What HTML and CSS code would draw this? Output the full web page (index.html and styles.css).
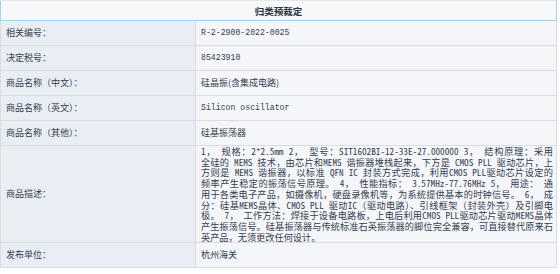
FILE: index.html
```html
<!DOCTYPE html>
<html lang="zh-CN">
<head>
<meta charset="utf-8">
<title>归类预裁定</title>
<link rel="stylesheet" href="styles.css">
</head>
<body>
<table class="ruling">
  <colgroup>
    <col class="col-label">
    <col class="col-value">
  </colgroup>
  <thead>
    <tr><th colspan="2" class="title">归类预裁定</th></tr>
  </thead>
  <tbody>
    <tr><td class="label">相关编号：</td><td class="value mono">R-2-2900-2022-0025</td></tr>
    <tr><td class="label">决定税号：</td><td class="value mono">85423910</td></tr>
    <tr><td class="label">商品名称（中文）：</td><td class="value">硅晶振(含集成电路)</td></tr>
    <tr><td class="label">商品名称（英文）：</td><td class="value mono">Silicon oscillator</td></tr>
    <tr><td class="label">商品名称（其他）：</td><td class="value">硅基振荡器</td></tr>
    <tr class="desc-row">
      <td class="label">商品描述：</td>
      <td class="value desc"><span class="ln">1， 规格：2*2.5mm 2， 型号：SIT1602BI-12-33E-27.000000 3， 结构原理：采用</span><span class="ln">全硅的 MEMS 技术，由芯片和MEMS 谐振器堆栈起来，下方是 CMOS PLL 驱动芯片，上</span><span class="ln">方则是 MEMS 谐振器，以标准 QFN IC 封装方式完成，利用CMOS PLL驱动芯片设定的</span><span class="ln">频率产生稳定的振荡信号原理。 4， 性能指标： 3.57MHz-77.76MHz 5， 用途： 通</span><span class="ln">用于各类电子产品，如摄像机，硬盘录像机等，为系统提供基本的时钟信号。 6， 成</span><span class="ln">分：硅基MEMS晶体、CMOS PLL 驱动IC（驱动电路）、引线框架（封装外壳）及引脚电</span><span class="ln">极。 7， 工作方法：焊接于设备电路板，上电后利用CMOS PLL驱动芯片驱动MEMS晶体</span><span class="ln">产生振荡信号。硅基振荡器与传统标准石英振荡器的脚位完全兼容，可直接替代原来石</span><span class="ln last">英产品，无须更改任何设计。</span></td>
    </tr>
    <tr><td class="label">发布单位：</td><td class="value">杭州海关</td></tr>
  </tbody>
</table>
</body>
</html>
```

FILE: styles.css
```css
html, body {
  margin: 0;
  padding: 0;
  background: #ffffff;
}

body {
  font-family: "Noto Sans CJK SC", "Noto Sans", sans-serif;
  color: #33404f;
}

.ruling {
  width: 557px;
  border-collapse: collapse;
  table-layout: fixed;
  font-size: 9px;
}

.col-label {
  width: 195px;
}

.title {
  height: 19px;
  padding: 0;
  background: #f7f8fa;
  border-top: 1px solid #e3e6ea;
  border-left: 1px solid #a6d2ee;
  border-right: 1px solid #a6d2ee;
  border-bottom: 1px solid #a6d2ee;
  font-weight: bold;
  font-size: 9.5px;
  color: #2b3440;
  text-align: center;
}

.ruling td {
  border: 1px solid #d9dde2;
  padding: 0 5px;
  height: 24px;
  vertical-align: middle;
  line-height: 12px;
}

.label {
  background: #e9eef4;
}

.value {
  background: #f5f6f9;
}

.mono {
  font-family: "Liberation Mono", "Noto Sans CJK SC", monospace;
  font-size: 8.2px;
}

.ruling td.desc {
  font-family: "Noto Sans Mono CJK SC", "Liberation Mono", "Noto Sans CJK SC", monospace;
  font-size: 9.2px;
  line-height: 10.7px;
  padding: 0 3px 0 5px;
}

.ln {
  display: block;
  white-space: nowrap;
  text-align: justify;
  text-align-last: justify;
}

.ln.last {
  text-align-last: left;
}

.desc-row td {
  height: 96px;
}
```
